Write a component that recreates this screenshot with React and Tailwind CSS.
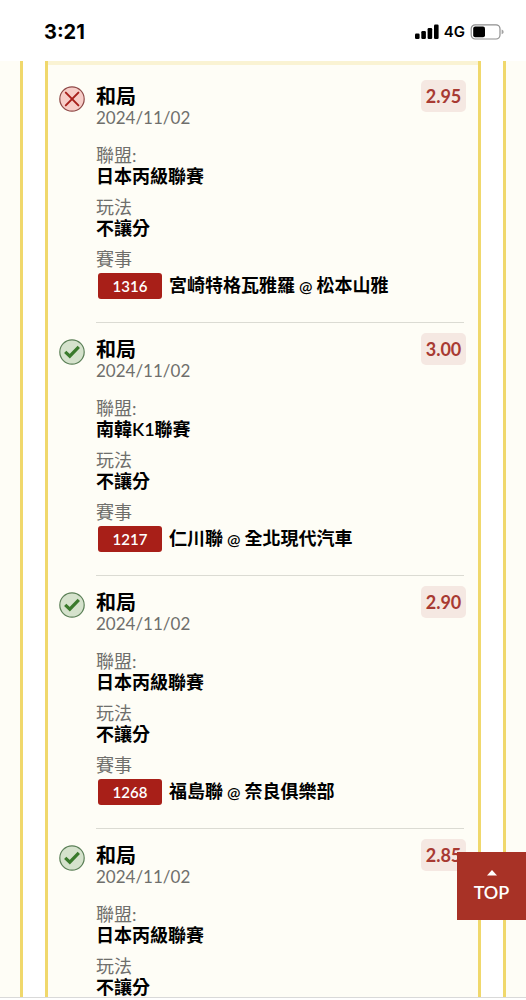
import { useRef } from "react";

const picks = [
  {
    id: 1,
    won: false,
    title: "和局",
    date: "2024/11/02",
    odds: "2.95",
    league: "日本丙級聯賽",
    play: "不讓分",
    match: { code: "1316", away: "宮崎特格瓦雅羅", home: "松本山雅" },
  },
  {
    id: 2,
    won: true,
    title: "和局",
    date: "2024/11/02",
    odds: "3.00",
    league: "南韓K1聯賽",
    play: "不讓分",
    match: { code: "1217", away: "仁川聯", home: "全北現代汽車" },
  },
  {
    id: 3,
    won: true,
    title: "和局",
    date: "2024/11/02",
    odds: "2.90",
    league: "日本丙級聯賽",
    play: "不讓分",
    match: { code: "1268", away: "福島聯", home: "奈良俱樂部" },
  },
  {
    id: 4,
    won: true,
    title: "和局",
    date: "2024/11/02",
    odds: "2.85",
    league: "日本丙級聯賽",
    play: "不讓分",
  },
];

function StatusBar() {
  return (
    <header className="flex h-[61px] shrink-0 items-center justify-between bg-white pt-0.5 pr-[22px] pl-11 font-['Inter',sans-serif] text-black">
      <span className="text-xl font-bold">3:21</span>
      <div className="flex items-center gap-[5px]">
        <svg viewBox="0 0 24 16" className="h-4 w-6" fill="currentColor" aria-hidden="true">
          <rect x="0" y="9.5" width="4.6" height="5.5" rx="1.2" />
          <rect x="6.3" y="7" width="4.6" height="8" rx="1.2" />
          <rect x="12.6" y="4" width="4.6" height="11" rx="1.2" />
          <rect x="19" y="0.5" width="4.6" height="14.5" rx="1.2" />
        </svg>
        <span className="text-[15px] leading-5 font-semibold">4G</span>
        <svg viewBox="0 0 34 16" className="h-4 w-[34px]" fill="none" aria-hidden="true">
          <rect x="1.2" y="0.8" width="28.8" height="14.2" rx="4" stroke="#8f8f8f" strokeWidth="1.2" />
          <rect x="3.2" y="2.6" width="11.8" height="10.6" rx="2" fill="#000" />
          <path d="M31.6 5.6c1.6.6 2 1.4 2 2.3s-.4 1.7-2 2.3z" fill="#a3a3a3" />
        </svg>
      </div>
    </header>
  );
}

function ResultIcon({ won }) {
  if (won) {
    return (
      <svg viewBox="0 0 26 26" className="mt-0.5 h-[26px] w-[26px]" fill="none" aria-hidden="true">
        <circle cx="13" cy="13" r="12.2" fill="#d5e2cc" stroke="#5c8058" strokeWidth="1.2" />
        <path d="M6.2 12.8l4.6 4.4 9-9.4" stroke="#3a7a2c" strokeWidth="3.2" />
      </svg>
    );
  }

  return (
    <svg viewBox="0 0 26 26" className="mt-0.5 h-[26px] w-[26px]" fill="none" aria-hidden="true">
      <circle cx="13" cy="13" r="12.2" fill="#f7cdc8" stroke="#8f4a48" strokeWidth="1.2" />
      <path
        d="M6.8 6.6l12.6 12.8M19.4 6.6L6.8 19.4"
        stroke="#a8201c"
        strokeWidth="2"
        strokeLinecap="round"
      />
    </svg>
  );
}

function Field({ label, children }) {
  return (
    <div className="leading-[21px]">
      <dt className="text-[#6f6f6c]">{label}</dt>
      <dd className="font-semibold text-black">{children}</dd>
    </div>
  );
}

function Pick({ pick }) {
  return (
    <li className="flex gap-[11px] pt-3.5 pr-[14px] pl-[11px]">
      <div className="w-[26px] shrink-0">
        <ResultIcon won={pick.won} />
      </div>
      <div className="min-w-0 flex-1">
        <div className="flex items-start justify-between">
          <div>
            <h2 className="text-xl leading-6 font-semibold text-black">{pick.title}</h2>
            <p className="text-[17px] leading-[19px] text-[#6f6f6c]">{pick.date}</p>
          </div>
          <span className="-mt-1 -mr-0.5 flex h-8 w-[45px] items-center justify-center rounded-[5px] bg-[#f5e8e2] text-lg font-bold text-[#a83a32]">
            {pick.odds}
          </span>
        </div>
        <dl className="mt-[18px] flex flex-col gap-2.5 text-lg">
          <Field label="聯盟:">{pick.league}</Field>
          <Field label="玩法">{pick.play}</Field>
          {pick.match && (
            <Field label="賽事">
              <span className="mt-[3px] ml-0.5 flex items-center gap-[7px]">
                <span className="flex h-[26px] w-16 shrink-0 items-center justify-center rounded-[3px] bg-[#a81f18] text-[15px] text-white">
                  {pick.match.code}
                </span>
                <span>
                  {pick.match.away}
                  <span className="text-base"> @ </span>
                  {pick.match.home}
                </span>
              </span>
            </Field>
          )}
        </dl>
        {pick.match && <div className="mt-[23px] border-b border-[#dbdbd3]" />}
      </div>
    </li>
  );
}

export default function App() {
  const scrollRef = useRef(null);

  const handleTop = () => {
    scrollRef.current?.scrollTo({ top: 0, behavior: "smooth" });
  };

  return (
    <div
      lang="zh-Hant"
      className="relative flex h-screen flex-col overflow-hidden bg-white font-['Lato','Noto_Sans_CJK_TC',sans-serif]"
    >
      <StatusBar />

      <main ref={scrollRef} className="min-h-0 flex-1 overflow-y-auto [scrollbar-width:none]">
        <div className="flex min-h-full gap-[22px]">
          <div className="w-[23px] shrink-0 border-r-3 border-[#f0d86c] bg-[#fefdf6]" />
          <div className="min-w-0 flex-1 border-x-3 border-[#f0d86c] bg-[#fefdf6]">
            <ul className="border-t-4 border-[#faf3d3] pt-[5px]">
              {picks.map((pick) => (
                <Pick key={pick.id} pick={pick} />
              ))}
            </ul>
          </div>
          <div className="w-[23px] shrink-0 border-l-3 border-[#f0d86c] bg-[#fefdf6]" />
        </div>
      </main>

      <footer className="h-[3px] shrink-0 border-t border-[#d9d9d9] bg-white" />

      <button
        type="button"
        onClick={handleTop}
        className="absolute right-0 bottom-20 flex h-[68px] w-[69px] flex-col items-center justify-center gap-1 bg-[#a83226] text-lg leading-6 font-semibold text-white"
      >
        <svg viewBox="0 0 12 7" className="h-[7px] w-3" fill="currentColor" aria-hidden="true">
          <path d="M1 6.5L6 1l5 5.5z" />
        </svg>
        TOP
      </button>
    </div>
  );
}
